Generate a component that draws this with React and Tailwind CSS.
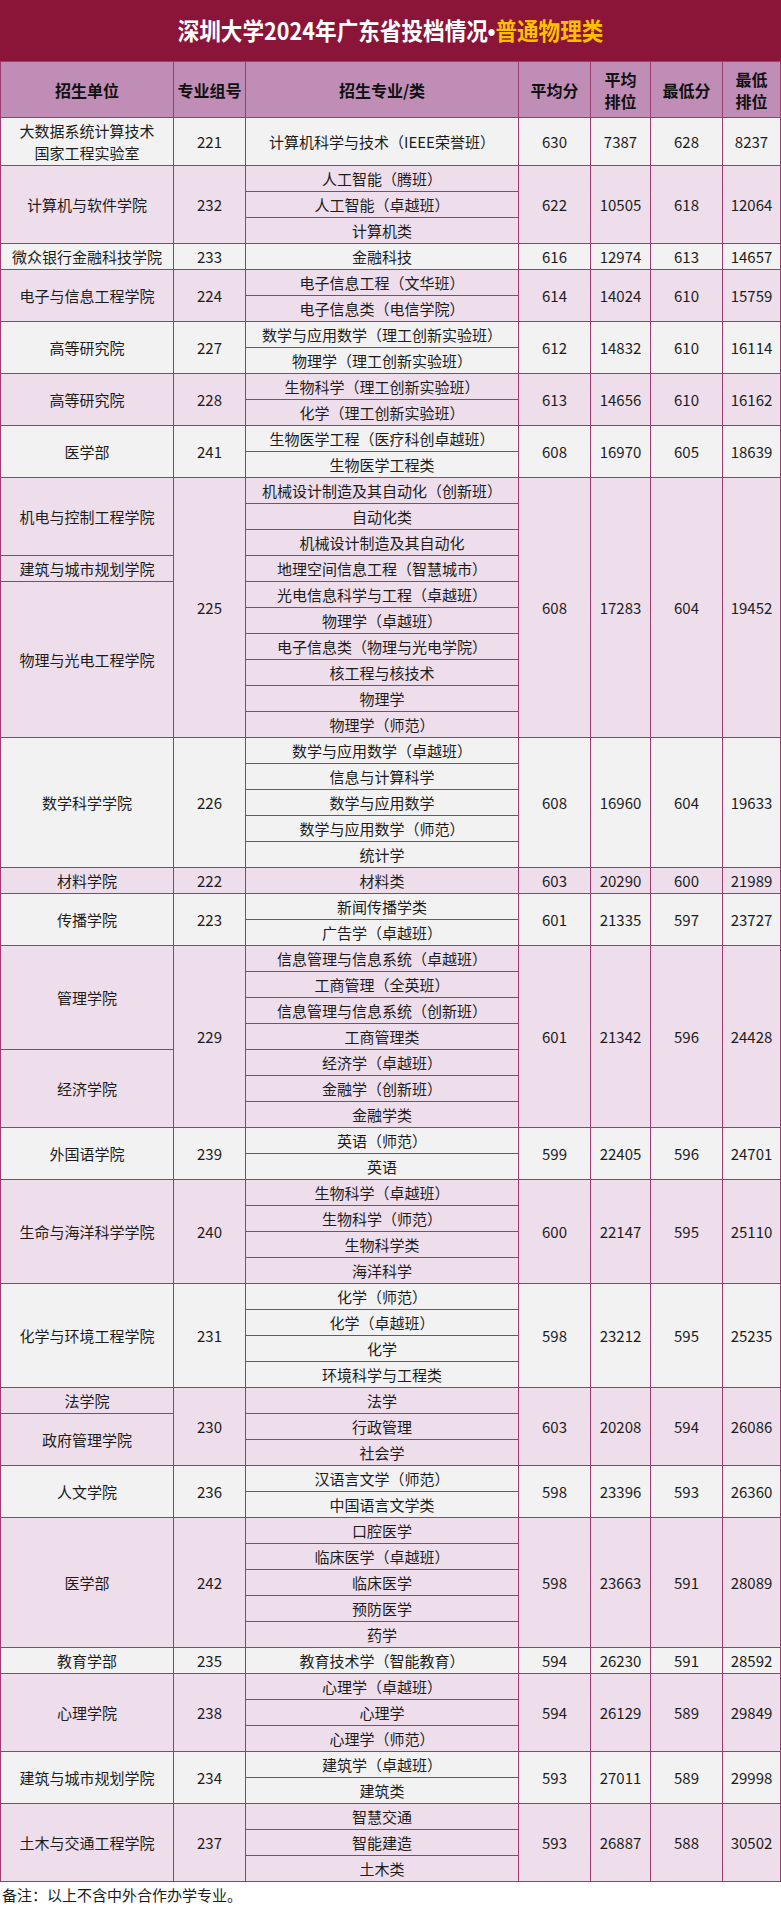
const groups = [
  { code: "221", units: [["大数据系统计算技术\n国家工程实验室", 1]], majors: ["计算机科学与技术（IEEE荣誉班）"], avg: "630", avgRank: "7387", min: "628", minRank: "8237" },
  { code: "232", units: [["计算机与软件学院", 3]], majors: ["人工智能（腾班）", "人工智能（卓越班）", "计算机类"], avg: "622", avgRank: "10505", min: "618", minRank: "12064" },
  { code: "233", units: [["微众银行金融科技学院", 1]], majors: ["金融科技"], avg: "616", avgRank: "12974", min: "613", minRank: "14657" },
  { code: "224", units: [["电子与信息工程学院", 2]], majors: ["电子信息工程（文华班）", "电子信息类（电信学院）"], avg: "614", avgRank: "14024", min: "610", minRank: "15759" },
  { code: "227", units: [["高等研究院", 2]], majors: ["数学与应用数学（理工创新实验班）", "物理学（理工创新实验班）"], avg: "612", avgRank: "14832", min: "610", minRank: "16114" },
  { code: "228", units: [["高等研究院", 2]], majors: ["生物科学（理工创新实验班）", "化学（理工创新实验班）"], avg: "613", avgRank: "14656", min: "610", minRank: "16162" },
  { code: "241", units: [["医学部", 2]], majors: ["生物医学工程（医疗科创卓越班）", "生物医学工程类"], avg: "608", avgRank: "16970", min: "605", minRank: "18639" },
  {
    code: "225",
    units: [["机电与控制工程学院", 3], ["建筑与城市规划学院", 1], ["物理与光电工程学院", 6]],
    majors: ["机械设计制造及其自动化（创新班）", "自动化类", "机械设计制造及其自动化", "地理空间信息工程（智慧城市）", "光电信息科学与工程（卓越班）", "物理学（卓越班）", "电子信息类（物理与光电学院）", "核工程与核技术", "物理学", "物理学（师范）"],
    avg: "608", avgRank: "17283", min: "604", minRank: "19452",
  },
  { code: "226", units: [["数学科学学院", 5]], majors: ["数学与应用数学（卓越班）", "信息与计算科学", "数学与应用数学", "数学与应用数学（师范）", "统计学"], avg: "608", avgRank: "16960", min: "604", minRank: "19633" },
  { code: "222", units: [["材料学院", 1]], majors: ["材料类"], avg: "603", avgRank: "20290", min: "600", minRank: "21989" },
  { code: "223", units: [["传播学院", 2]], majors: ["新闻传播学类", "广告学（卓越班）"], avg: "601", avgRank: "21335", min: "597", minRank: "23727" },
  {
    code: "229",
    units: [["管理学院", 4], ["经济学院", 3]],
    majors: ["信息管理与信息系统（卓越班）", "工商管理（全英班）", "信息管理与信息系统（创新班）", "工商管理类", "经济学（卓越班）", "金融学（创新班）", "金融学类"],
    avg: "601", avgRank: "21342", min: "596", minRank: "24428",
  },
  { code: "239", units: [["外国语学院", 2]], majors: ["英语（师范）", "英语"], avg: "599", avgRank: "22405", min: "596", minRank: "24701" },
  { code: "240", units: [["生命与海洋科学学院", 4]], majors: ["生物科学（卓越班）", "生物科学（师范）", "生物科学类", "海洋科学"], avg: "600", avgRank: "22147", min: "595", minRank: "25110" },
  { code: "231", units: [["化学与环境工程学院", 4]], majors: ["化学（师范）", "化学（卓越班）", "化学", "环境科学与工程类"], avg: "598", avgRank: "23212", min: "595", minRank: "25235" },
  { code: "230", units: [["法学院", 1], ["政府管理学院", 2]], majors: ["法学", "行政管理", "社会学"], avg: "603", avgRank: "20208", min: "594", minRank: "26086" },
  { code: "236", units: [["人文学院", 2]], majors: ["汉语言文学（师范）", "中国语言文学类"], avg: "598", avgRank: "23396", min: "593", minRank: "26360" },
  { code: "242", units: [["医学部", 5]], majors: ["口腔医学", "临床医学（卓越班）", "临床医学", "预防医学", "药学"], avg: "598", avgRank: "23663", min: "591", minRank: "28089" },
  { code: "235", units: [["教育学部", 1]], majors: ["教育技术学（智能教育）"], avg: "594", avgRank: "26230", min: "591", minRank: "28592" },
  { code: "238", units: [["心理学院", 3]], majors: ["心理学（卓越班）", "心理学", "心理学（师范）"], avg: "594", avgRank: "26129", min: "589", minRank: "29849" },
  { code: "234", units: [["建筑与城市规划学院", 2]], majors: ["建筑学（卓越班）", "建筑类"], avg: "593", avgRank: "27011", min: "589", minRank: "29998" },
  { code: "237", units: [["土木与交通工程学院", 3]], majors: ["智慧交通", "智能建造", "土木类"], avg: "593", avgRank: "26887", min: "588", minRank: "30502" },
];

const font = { fontFamily: '"Noto Sans CJK SC", "Noto Sans", sans-serif' };

function Cell({ row, span = 1, col, bg, children }) {
  return (
    <div
      className={`${col} ${bg} flex items-center justify-center text-center whitespace-pre-line text-[15px] leading-[22px] text-[#1c1c1c]`}
      style={{ gridRow: `${row} / span ${span}` }}
    >
      {children}
    </div>
  );
}

function Head({ children }) {
  return (
    <div className="row-start-1 flex items-center justify-center bg-[#c08db6] text-center whitespace-pre-line text-[16px] font-bold leading-[22px] text-[#111]">
      {children}
    </div>
  );
}

export default function App() {
  let row = 2;
  const cells = [];
  groups.forEach((g, i) => {
    const bg = i % 2 === 0 ? "bg-[#f2f2f2]" : "bg-[#eedeeb]";
    const n = g.majors.length;
    let r = row;
    g.units.forEach(([name, span]) => {
      cells.push(<Cell key={`u${g.code}${r}`} row={r} span={span} col="col-start-1" bg={bg}>{name}</Cell>);
      r += span;
    });
    cells.push(<Cell key={`c${g.code}`} row={row} span={n} col="col-start-2" bg={bg}>{g.code}</Cell>);
    g.majors.forEach((m, j) => {
      cells.push(<Cell key={`m${g.code}${j}`} row={row + j} col="col-start-3" bg={bg}>{m}</Cell>);
    });
    cells.push(<Cell key={`a${g.code}`} row={row} span={n} col="col-start-4" bg={bg}>{g.avg}</Cell>);
    cells.push(<Cell key={`ar${g.code}`} row={row} span={n} col="col-start-5" bg={bg}>{g.avgRank}</Cell>);
    cells.push(<Cell key={`n${g.code}`} row={row} span={n} col="col-start-6" bg={bg}>{g.min}</Cell>);
    cells.push(<Cell key={`nr${g.code}`} row={row} span={n} col="col-start-7" bg={bg}>{g.minRank}</Cell>);
    row += n;
  });

  return (
    <div className="w-[781px] bg-white" style={font}>
      <div className="flex h-[61px] items-center justify-center bg-[#8b1538]">
        <span className="inline-block scale-x-90 text-[24px] font-bold text-white">
          深圳大学2024年广东省投档情况<span className="font-['Liberation_Sans',sans-serif]">•</span>
          <span className="text-[#ffc000]">普通物理类</span>
        </span>
      </div>
      <div className="grid grid-cols-[172px_71px_272px_71px_59px_71px_57px] grid-rows-[55px_47px_repeat(66,25px)] gap-px bg-[#9e3b6f] p-px">
        <Head>招生单位</Head>
        <Head>专业组号</Head>
        <Head>招生专业/类</Head>
        <Head>平均分</Head>
        <Head>{"平均\n排位"}</Head>
        <Head>最低分</Head>
        <Head>{"最低\n排位"}</Head>
        {cells}
      </div>
      <p className="h-[26px] pl-[2px] pt-[2px] text-[15px] leading-[22px] text-[#1c1c1c]">备注：以上不含中外合作办学专业。</p>
    </div>
  );
}
